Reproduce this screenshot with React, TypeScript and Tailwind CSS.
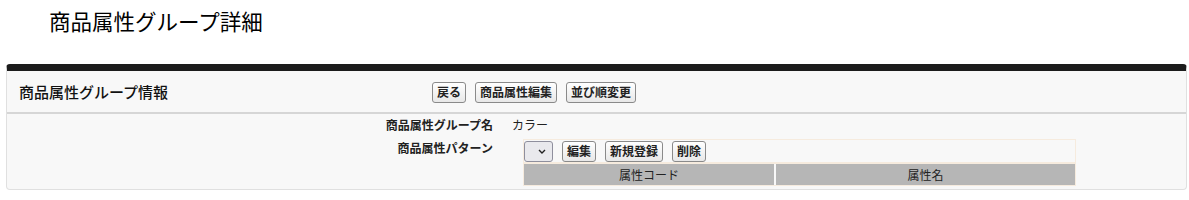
import React from 'react';

const FONT = { fontFamily: '"Noto Sans CJK JP", "Noto Sans", sans-serif' };

function Btn({ label }: { label: string }) {
  return (
    <button className="h-[21px] px-[4px] rounded-[3px] border border-[#8a8a8a] bg-gradient-to-b from-white to-[#e8e8e8] text-[12px] font-bold leading-none text-[#222]">
      {label}
    </button>
  );
}

export default function App() {
  return (
    <div className="bg-white w-[1189px] h-[200px] overflow-hidden text-[#222]" style={FONT}>
      {/* Page title */}
      <h1 className="pl-[49px] pt-[6px] text-[21.5px] leading-[29px] font-normal text-black">
        商品属性グループ詳細
      </h1>

      {/* Panel */}
      <div className="mt-[29px] ml-[6px] mr-[2px] border border-[#e0e0e0] border-t-[7px] border-t-[#1c1c1c] rounded-[4px] bg-[#f8f8f8]">
        {/* Panel header */}
        <div className="flex items-center h-[43px] border-b-2 border-[#d6d6d6]">
          <div className="w-[425px] pl-[12px] text-[15px] font-medium leading-none text-[#111]">
            商品属性グループ情報
          </div>
          <div className="flex gap-[9px] pt-[1px]">
            <Btn label="戻る" />
            <Btn label="商品属性編集" />
            <Btn label="並び順変更" />
          </div>
        </div>

        {/* Panel body */}
        <div className="pt-[2px] pb-[3px] text-[12px]">
          <div className="flex h-[18px] items-center">
            <div className="w-[498px] pr-[12px] text-right font-bold">商品属性グループ名</div>
            <div className="pl-[7px]">カラー</div>
          </div>
          <div className="flex mt-[5px]">
            <div className="w-[498px] pr-[12px] text-right font-bold">商品属性パターン</div>
            <div className="ml-[18px] w-[553px] border border-[#f6ebde] bg-[#f8f8f8]">
              <div className="flex items-center gap-[9px] h-[22px]">
                <div className="w-[29px] h-[21px] rounded-[3px] border border-[#8f8f9d] bg-[#e9e9ed] flex items-center justify-center pl-[6px]">
                  <svg width="8" height="5" viewBox="0 0 8 5">
                    <path d="M1 1 L4 4 L7 1" fill="none" stroke="#222" strokeWidth="1.4" />
                  </svg>
                </div>
                <Btn label="編集" />
                <Btn label="新規登録" />
                <Btn label="削除" />
              </div>
              <div className="flex gap-[2px] border-t-2 border-[#f6ebde]">
                <div className="w-[250px] h-[21px] bg-[#b6b6b6] flex items-center justify-center">属性コード</div>
                <div className="flex-1 h-[21px] bg-[#b6b6b6] flex items-center justify-center">属性名</div>
              </div>
            </div>
          </div>
        </div>
      </div>
    </div>
  );
}
